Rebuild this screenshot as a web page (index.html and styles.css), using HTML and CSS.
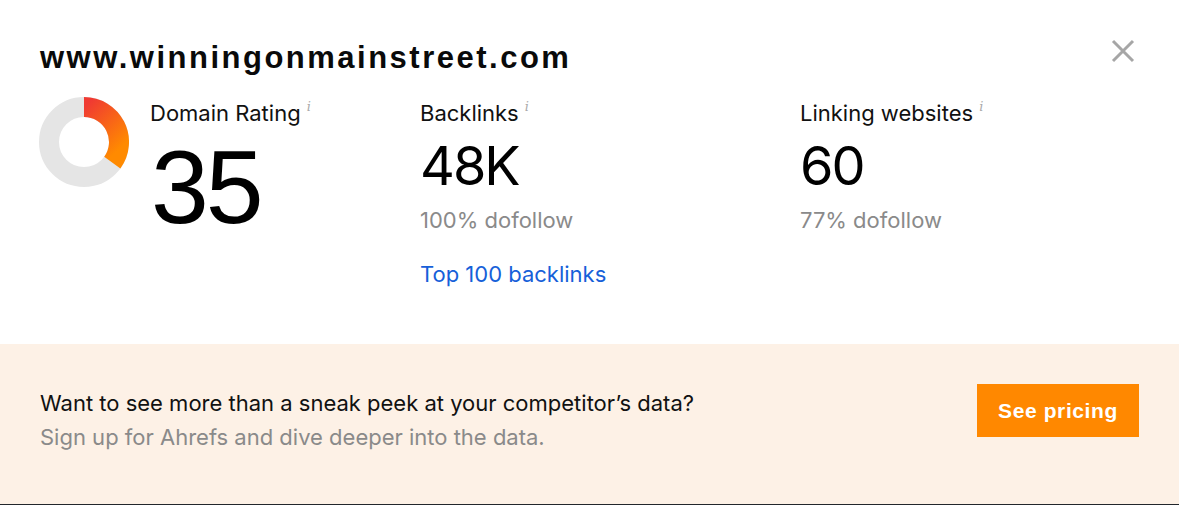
FILE: index.html
```html
<!DOCTYPE html>
<html lang="en">
<head>
<meta charset="utf-8">
<title>Website Authority Checker</title>
<link rel="stylesheet" href="styles.css">
</head>
<body>
<div class="modal">
  <div class="top">
    <div class="head">
      <h1 class="domain">www.winningonmainstreet.com</h1>
      <button class="close" aria-label="Close">
        <svg width="24" height="24" viewBox="0 0 24 24"><path d="M2 2 L22 22 M22 2 L2 22" stroke="#a6a6a6" stroke-width="3" fill="none"/></svg>
      </button>
    </div>
    <div class="stats">
      <div class="stat stat-dr">
        <svg class="donut" width="90" height="90" viewBox="0 0 90 90">
          <defs>
            <linearGradient id="g" x1="0" y1="0" x2="0.6" y2="1">
              <stop offset="0" stop-color="#f03a32"/>
              <stop offset="1" stop-color="#ff8a00"/>
            </linearGradient>
          </defs>
          <circle cx="45" cy="45" r="35" fill="none" stroke="#e5e5e5" stroke-width="20"/>
          <path d="M45 10 A35 35 0 0 1 73.3 65.6" fill="none" stroke="url(#g)" stroke-width="20"/>
        </svg>
        <div class="dr-text">
          <div class="label">Domain Rating<sup class="info">i</sup></div>
          <div class="big">35</div>
        </div>
      </div>
      <div class="stat">
        <div class="label">Backlinks<sup class="info">i</sup></div>
        <div class="value">48K</div>
        <div class="sub">100% dofollow</div>
        <a class="link" href="#">Top 100 backlinks</a>
      </div>
      <div class="stat">
        <div class="label">Linking websites<sup class="info">i</sup></div>
        <div class="value">60</div>
        <div class="sub">77% dofollow</div>
      </div>
    </div>
  </div>
  <div class="banner">
    <div class="banner-text">
      <p class="q">Want to see more than a sneak peek at your competitor’s data?</p>
      <p class="s">Sign up for Ahrefs and dive deeper into the data.</p>
    </div>
    <a class="btn" href="#">See pricing</a>
  </div>
</div>
</body>
</html>
```

FILE: styles.css
```css
* { box-sizing: border-box; }
html, body { margin: 0; padding: 0; background: #fff; }
body { font-family: Inter, "Liberation Sans", sans-serif; color: #111; }

.modal { width: 1179px; height: 505px; display: flex; flex-direction: column; }

.top { height: 344px; padding: 38px 40px 0 40px; }

.head { display: flex; justify-content: space-between; align-items: flex-start; }
.domain {
  margin: 0;
  font-family: "Liberation Sans", Arial, sans-serif;
  font-weight: 700;
  font-size: 31px;
  line-height: 40px;
  letter-spacing: 2.5px;
  color: #0a0a0a;
}
.close { border: 0; background: none; padding: 0; margin: 1px 4px 0 0; width: 24px; height: 24px; cursor: pointer; }
.close svg { display: block; }

.stats { display: grid; grid-template-columns: 380px 380px 1fr; margin-top: 21px; }

.stat-dr { display: flex; gap: 21px; align-items: flex-start; }
.donut { display: block; margin: -2px 0 0 -1px; }

.label { font-size: 22px; line-height: 28px; color: #111; }
.info { font-family: "DejaVu Serif", serif; font-style: italic; font-size: 13px; color: #aaaaaa; vertical-align: top; position: relative; top: -6px; margin-left: 6px; }

.big {
  font-family: "Liberation Sans", Arial, sans-serif;
  font-size: 104px; line-height: 100px;
  margin: 10px 0 0 1px;
  color: #000; letter-spacing: -3px;
}
.value { font-size: 54px; line-height: 60px; margin-top: 9px; color: #000; letter-spacing: -2px; }
.sub { font-size: 22px; line-height: 28px; color: #8a8a8a; margin-top: 10px; }
.link { display: inline-block; margin-top: 26px; font-size: 22px; line-height: 28px; color: #1660d9; text-decoration: none; }

.banner {
  flex: 1;
  background: #fdf1e6;
  border-bottom: 1px solid #22262c;
  display: flex;
  align-items: flex-start;
  justify-content: space-between;
  padding: 40px 40px 0 40px;
}
.banner-text { padding-top: 2px; }
.banner-text p { margin: 0; font-size: 22px; line-height: 34px; }
.banner-text .q { color: #111; }
.banner-text .s { color: #8a8a8a; }
.btn {
  display: flex; align-items: center; justify-content: center;
  width: 162px; height: 53px;
  background: #ff8800; color: #fff;
  font-family: "Liberation Sans", Arial, sans-serif;
  font-weight: 700; font-size: 21px; letter-spacing: 0.6px;
  text-decoration: none;
}
```
